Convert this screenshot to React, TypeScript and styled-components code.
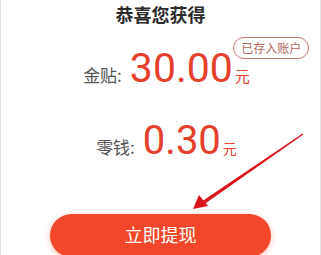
import React from "react";
import styled, { createGlobalStyle } from "styled-components";

const Global = createGlobalStyle`
  html, body { margin: 0; padding: 0; background: #fff; }
  body { font-family: Roboto, "Noto Sans CJK SC", sans-serif; }
`;

const Card = styled.div`
  position: relative;
  width: 321px;
  height: 255px;
  box-sizing: border-box;
  border-left: 1px solid #e3e3e3;
  border-right: 1px solid #e3e3e3;
  background: #fff;
  overflow: hidden;
  display: flex;
  flex-direction: column;
  align-items: center;
`;

const Title = styled.div`
  margin-top: 2px;
  font-family: "Noto Sans CJK SC", sans-serif;
  font-size: 18px;
  font-weight: 700;
  line-height: 24px;
  color: #2b2b2b;
`;

const AmountRow = styled.div<{ $top: number; $shift: number }>`
  position: relative;
  margin-top: ${(p) => p.$top}px;
  margin-left: ${(p) => p.$shift}px;
  display: flex;
  align-items: baseline;
`;

const Label = styled.span`
  font-family: "Noto Sans CJK SC", sans-serif;
  font-size: 17px;
  color: #555;
  margin-right: 8px;
`;

const Value = styled.span<{ $size: number }>`
  font-family: Roboto, "Liberation Sans", sans-serif;
  font-size: ${(p) => p.$size}px;
  line-height: 1;
  color: #e4402b;
`;

const Unit = styled.span<{ $size: number }>`
  font-family: "Noto Sans CJK SC", sans-serif;
  font-size: ${(p) => p.$size}px;
  color: #e4402b;
  margin-left: 2px;
`;

const Badge = styled.span`
  position: absolute;
  left: 150px;
  top: -11px;
  height: 22px;
  box-sizing: border-box;
  padding: 0 7px;
  border: 1px solid #c77d70;
  border-radius: 11px;
  font-family: "Noto Sans CJK SC", sans-serif;
  font-size: 12px;
  line-height: 20px;
  color: #b0685b;
  white-space: nowrap;
  background: #fff;
`;

const Button = styled.button`
  margin-top: auto;
  margin-bottom: -2px;
  width: 221px;
  height: 43px;
  border: none;
  border-radius: 22px;
  background: #f2472a;
  box-shadow: 0 2px 6px rgba(240, 70, 40, 0.35);
  color: #fff;
  font-family: "Noto Sans CJK SC", sans-serif;
  font-size: 18px;
  padding: 0;
  padding-bottom: 3px;
`;

const Arrow = styled.svg`
  position: absolute;
  left: 0;
  top: 0;
  pointer-events: none;
`;

export default function App() {
  return (
    <>
      <Global />
      <Card>
        <Title>恭喜您获得</Title>
        <AmountRow $top={22} $shift={12}>
          <Label>金贴:</Label>
          <Value $size={41}>30.00</Value>
          <Unit $size={15}>元</Unit>
          <Badge>已存入账户</Badge>
        </AmountRow>
        <AmountRow $top={32} $shift={12}>
          <Label>零钱:</Label>
          <Value $size={40}>0.30</Value>
          <Unit $size={14}>元</Unit>
        </AmountRow>
        <Button>立即提现</Button>
        <Arrow width="321" height="255" viewBox="0 0 321 255">
          <polygon points="301.6,133.4 302.4,134.6 203.5,204 201.5,201" fill="#d9141b" />
          <polygon points="192,209 198,195 207,206" fill="#d9141b" />
        </Arrow>
      </Card>
    </>
  );
}
